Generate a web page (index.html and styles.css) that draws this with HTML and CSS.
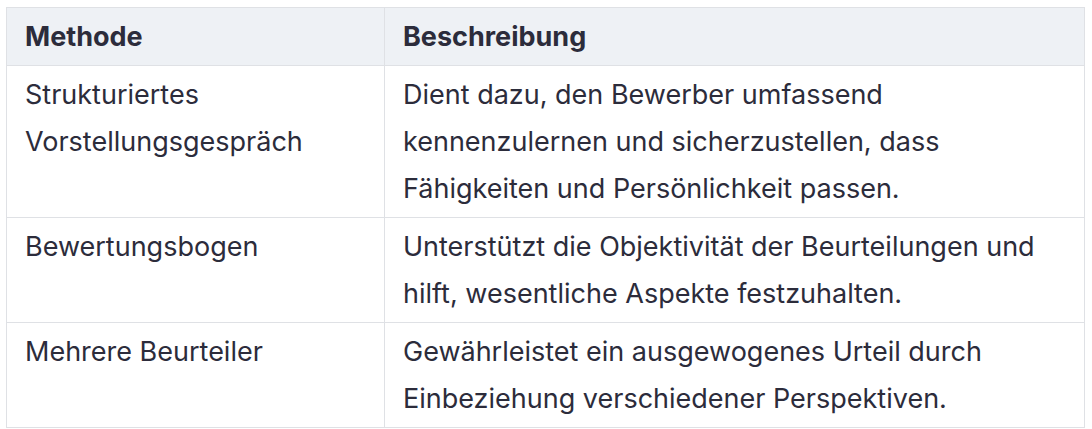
FILE: index.html
```html
<!DOCTYPE html>
<html lang="de">
<head>
<meta charset="utf-8">
<link rel="stylesheet" href="styles.css">
</head>
<body>
<div class="wrap">
<table class="tbl">
<thead>
<tr><th class="c1">Methode</th><th>Beschreibung</th></tr>
</thead>
<tbody>
<tr><td class="c1">Strukturiertes Vorstellungsgespräch</td><td>Dient dazu, den Bewerber umfassend kennenzulernen und sicherzustellen, dass Fähigkeiten und Persönlichkeit passen.</td></tr>
<tr><td class="c1">Bewertungsbogen</td><td>Unterstützt die Objektivität der Beurteilungen und hilft, wesentliche Aspekte festzuhalten.</td></tr>
<tr><td class="c1">Mehrere Beurteiler</td><td>Gewährleistet ein ausgewogenes Urteil durch Einbeziehung verschiedener Perspektiven.</td></tr>
</tbody>
</table>
</div>
</body>
</html>
```
FILE: styles.css
```css
html, body { margin: 0; padding: 0; background: #fff; }
.wrap { padding: 7px 7px 0 6px; }
.tbl {
  width: 1079px;
  border-collapse: collapse;
  font-family: Inter, "Noto Sans", sans-serif;
  font-size: 27px;
  line-height: 47px;
  color: #2c2c3b;
}
.tbl th, .tbl td {
  border: 1px solid #dfe1e5;
  padding: 5px 18px 5px 18px;
  text-align: left;
  vertical-align: top;
}
.tbl th { background: #eef1f5; font-weight: 700; }
.tbl .c1 { width: 341px; }
```
